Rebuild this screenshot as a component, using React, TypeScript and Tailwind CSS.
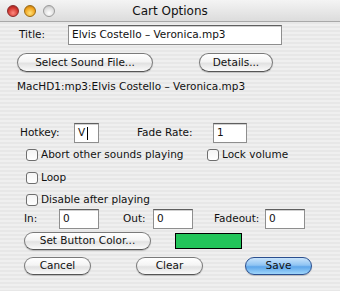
import React from "react";

const font = { fontFamily: '"DejaVu Sans", "Liberation Sans", sans-serif' };

const Field = ({ value, w, caret }: { value: string; w: string; caret?: boolean }) => (
  <div
    className={`${w} h-full bg-white border border-[#8e8e8e] border-t-[#5f5f5f] shadow-[inset_0_1px_0_#d0d0d0] flex items-center pl-[3px] text-[10.5px] text-[#111]`}
  >
    {value}
    {caret && <span className="ml-[2px] w-[1px] h-[13px] bg-black" />}
  </div>
);

const Button = ({ label, w, primary }: { label: string; w: string; primary?: boolean }) => (
  <div
    className={`${w} h-full rounded-full flex items-center justify-center text-[10.5px] text-[#111] border ${
      primary
        ? "border-[#2b4f8f] bg-[linear-gradient(180deg,#c9e4fb_0%,#8fc4f3_45%,#5ea6ea_55%,#9fd6fb_100%)]"
        : "border-[#7a7a7a] border-b-[#555] bg-[linear-gradient(180deg,#ffffff_0%,#f4f4f4_45%,#e2e2e2_55%,#fafafa_100%)]"
    } shadow-[0_1px_1px_rgba(0,0,0,0.2)]`}
  >
    {label}
  </div>
);

const Check = ({ label }: { label: string }) => (
  <div className="flex items-center gap-[3px]">
    <div className="w-[12px] h-[12px] rounded-[3px] border border-[#6e6e6e] bg-[linear-gradient(180deg,#f4f4f4,#ffffff)]" />
    <span className="text-[10.5px] text-[#111]">{label}</span>
  </div>
);

export default function App() {
  return (
    <div
      style={font}
      className="w-[340px] h-[291px] overflow-hidden text-[#111] bg-[repeating-linear-gradient(180deg,#efefef_0px,#efefef_2px,#e7e7e7_2px,#e7e7e7_4px)] flex flex-col"
    >
      {/* title bar */}
      <div className="h-[22px] shrink-0 flex items-center relative border-b border-[#a8a8a8] bg-[linear-gradient(180deg,#f4f4f4,#dcdcdc)]">
        <div className="flex items-center ml-[7px] gap-[5px]">
          <div className="w-[12px] h-[12px] rounded-full border border-[#8a2a2a] bg-[radial-gradient(circle_at_50%_70%,#ff8a80,#d0352e_60%,#8c1d1a)]" />
          <div className="w-[12px] h-[12px] rounded-full border border-[#9a6a10] bg-[radial-gradient(circle_at_50%_70%,#ffe27a,#f0a21d_60%,#a8640c)]" />
          <div className="ml-[2px] w-[12px] h-[12px] rounded-full border border-[#9a9a9a] bg-[radial-gradient(circle_at_50%_70%,#ffffff,#dcdcdc_60%,#b0b0b0)]" />
        </div>
        <div className="absolute inset-0 flex items-center justify-center text-[12px] text-[#111]">
          Cart Options
        </div>
      </div>

      {/* title */}
      <div className="mt-[3px] h-[20px] flex items-center text-[10.5px]">
        <span className="ml-[19px] w-[49px]">Title:</span>
        <Field value="Elvis Costello – Veronica.mp3" w="w-[214px]" />
      </div>

      <div className="mt-[8px] h-[19px] flex items-center">
        <div className="ml-[17px] h-full">
          <Button label="Select Sound File..." w="w-[136px]" />
        </div>
        <div className="ml-[46px] h-full">
          <Button label="Details..." w="w-[74px]" />
        </div>
      </div>

      <div className="mt-[8px] h-[14px] flex items-center ml-[17px] text-[10.5px]">
        MacHD1:mp3:Elvis Costello – Veronica.mp3
      </div>

      {/* hotkey */}
      <div className="mt-[29px] h-[20px] flex items-center text-[10.5px]">
        <span className="ml-[20px] w-[54px]">Hotkey:</span>
        <Field value="V" w="w-[25px]" caret />
        <span className="ml-[38px] w-[76px]">Fade Rate:</span>
        <Field value="1" w="w-[34px]" />
      </div>

      <div className="mt-[4px] h-[16px] flex items-center">
        <div className="ml-[26px] w-[181px]">
          <Check label="Abort other sounds playing" />
        </div>
        <Check label="Lock volume" />
      </div>
      <div className="mt-[7px] h-[16px] flex items-center ml-[26px]">
        <Check label="Loop" />
      </div>
      <div className="mt-[6px] h-[16px] flex items-center ml-[26px]">
        <Check label="Disable after playing" />
      </div>

      {/* in / out */}
      <div className="mt-[1px] h-[20px] flex items-center text-[10.5px]">
        <span className="ml-[24px] w-[35px]">In:</span>
        <Field value="0" w="w-[40px]" />
        <span className="ml-[24px] w-[30px]">Out:</span>
        <Field value="0" w="w-[40px]" />
        <span className="ml-[21px] w-[51px]">Fadeout:</span>
        <Field value="0" w="w-[40px]" />
      </div>

      <div className="mt-[3px] h-[18px] flex items-center">
        <div className="ml-[24px] h-full">
          <Button label="Set Button Color..." w="w-[127px]" />
        </div>
        <div className="ml-[24px] w-[67px] h-[16px] bg-[#22c55a] border border-black" />
      </div>

      <div className="mt-[7px] h-[18px] flex items-center">
        <div className="ml-[24px] h-full">
          <Button label="Cancel" w="w-[67px]" />
        </div>
        <div className="ml-[45px] h-full">
          <Button label="Clear" w="w-[67px]" />
        </div>
        <div className="ml-[42px] h-full">
          <Button label="Save" w="w-[67px]" primary />
        </div>
      </div>
    </div>
  );
}
